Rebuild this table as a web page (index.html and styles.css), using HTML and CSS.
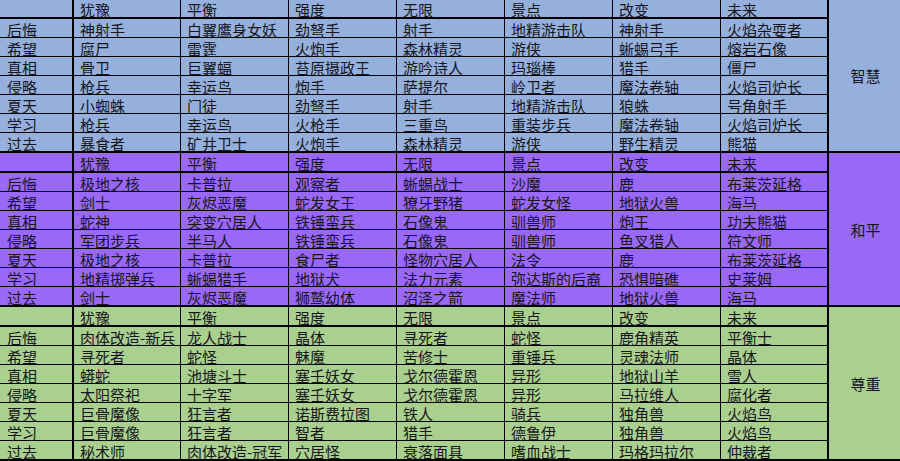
FILE: index.html
```html
<!DOCTYPE html>
<html lang="zh">
<head>
<meta charset="utf-8">
<link rel="stylesheet" href="styles.css">
</head>
<body>
<div class="sheet">
  <div class="section blue first">
    <div class="c h k"></div><div class="c h">犹豫</div><div class="c h">平衡</div><div class="c h">强度</div><div class="c h">无限</div><div class="c h">景点</div><div class="c h">改变</div><div class="c h e">未来</div>
    <div class="label">智慧</div>
    <div class="c k">后悔</div><div class="c">神射手</div><div class="c">白翼鹰身女妖</div><div class="c">劲弩手</div><div class="c">射手</div><div class="c">地精游击队</div><div class="c">神射手</div><div class="c e">火焰杂耍者</div>
    <div class="c k">希望</div><div class="c">腐尸</div><div class="c">雷霆</div><div class="c">火炮手</div><div class="c">森林精灵</div><div class="c">游侠</div><div class="c">蜥蜴弓手</div><div class="c e">熔岩石像</div>
    <div class="c k">真相</div><div class="c">骨卫</div><div class="c">巨翼蝠</div><div class="c">苔原摄政王</div><div class="c">游吟诗人</div><div class="c">玛瑙棒</div><div class="c">猎手</div><div class="c e">僵尸</div>
    <div class="c k">侵略</div><div class="c">枪兵</div><div class="c">幸运鸟</div><div class="c">炮手</div><div class="c">萨提尔</div><div class="c">岭卫者</div><div class="c">魔法卷轴</div><div class="c e">火焰司炉长</div>
    <div class="c k">夏天</div><div class="c">小蜘蛛</div><div class="c">门徒</div><div class="c">劲弩手</div><div class="c">射手</div><div class="c">地精游击队</div><div class="c">狼蛛</div><div class="c e">号角射手</div>
    <div class="c k">学习</div><div class="c">枪兵</div><div class="c">幸运鸟</div><div class="c">火枪手</div><div class="c">三重鸟</div><div class="c">重装步兵</div><div class="c">魔法卷轴</div><div class="c e">火焰司炉长</div>
    <div class="c k l">过去</div><div class="c l">暴食者</div><div class="c l">矿井卫士</div><div class="c l">火炮手</div><div class="c l">森林精灵</div><div class="c l">游侠</div><div class="c l">野生精灵</div><div class="c e l">熊猫</div>
  </div>
  <div class="section purple">
    <div class="c h k"></div><div class="c h">犹豫</div><div class="c h">平衡</div><div class="c h">强度</div><div class="c h">无限</div><div class="c h">景点</div><div class="c h">改变</div><div class="c h e">未来</div>
    <div class="label">和平</div>
    <div class="c k">后悔</div><div class="c">极地之核</div><div class="c">卡普拉</div><div class="c">观察者</div><div class="c">蜥蜴战士</div><div class="c">沙魔</div><div class="c">鹿</div><div class="c e">布莱茨延格</div>
    <div class="c k">希望</div><div class="c">剑士</div><div class="c">灰烬恶魔</div><div class="c">蛇发女王</div><div class="c">獠牙野猪</div><div class="c">蛇发女怪</div><div class="c">地狱火兽</div><div class="c e">海马</div>
    <div class="c k">真相</div><div class="c">蛇神</div><div class="c">突变穴居人</div><div class="c">铁锤蛮兵</div><div class="c">石像鬼</div><div class="c">驯兽师</div><div class="c">炮王</div><div class="c e">功夫熊猫</div>
    <div class="c k">侵略</div><div class="c">军团步兵</div><div class="c">半马人</div><div class="c">铁锤蛮兵</div><div class="c">石像鬼</div><div class="c">驯兽师</div><div class="c">鱼叉猎人</div><div class="c e">符文师</div>
    <div class="c k">夏天</div><div class="c">极地之核</div><div class="c">卡普拉</div><div class="c">食尸者</div><div class="c">怪物穴居人</div><div class="c">法令</div><div class="c">鹿</div><div class="c e">布莱茨延格</div>
    <div class="c k">学习</div><div class="c">地精掷弹兵</div><div class="c">蜥蜴猎手</div><div class="c">地狱犬</div><div class="c">法力元素</div><div class="c">弥达斯的后裔</div><div class="c">恐惧暗礁</div><div class="c e">史莱姆</div>
    <div class="c k l">过去</div><div class="c l">剑士</div><div class="c l">灰烬恶魔</div><div class="c l">狮鹫幼体</div><div class="c l">沼泽之箭</div><div class="c l">魔法师</div><div class="c l">地狱火兽</div><div class="c e l">海马</div>
  </div>
  <div class="section green">
    <div class="c h k"></div><div class="c h">犹豫</div><div class="c h">平衡</div><div class="c h">强度</div><div class="c h">无限</div><div class="c h">景点</div><div class="c h">改变</div><div class="c h e">未来</div>
    <div class="label">尊重</div>
    <div class="c k">后悔</div><div class="c">肉体改造-新兵</div><div class="c">龙人战士</div><div class="c">晶体</div><div class="c">寻死者</div><div class="c">蛇怪</div><div class="c">鹿角精英</div><div class="c e">平衡士</div>
    <div class="c k">希望</div><div class="c">寻死者</div><div class="c">蛇怪</div><div class="c">魅魔</div><div class="c">苦修士</div><div class="c">重锤兵</div><div class="c">灵魂法师</div><div class="c e">晶体</div>
    <div class="c k">真相</div><div class="c">蟒蛇</div><div class="c">池塘斗士</div><div class="c">塞壬妖女</div><div class="c">戈尔德霍恩</div><div class="c">异形</div><div class="c">地狱山羊</div><div class="c e">雪人</div>
    <div class="c k">侵略</div><div class="c">太阳祭祀</div><div class="c">十字军</div><div class="c">塞壬妖女</div><div class="c">戈尔德霍恩</div><div class="c">异形</div><div class="c">马拉维人</div><div class="c e">腐化者</div>
    <div class="c k">夏天</div><div class="c">巨骨魔像</div><div class="c">狂言者</div><div class="c">诺斯费拉图</div><div class="c">铁人</div><div class="c">骑兵</div><div class="c">独角兽</div><div class="c e">火焰鸟</div>
    <div class="c k">学习</div><div class="c">巨骨魔像</div><div class="c">狂言者</div><div class="c">智者</div><div class="c">猎手</div><div class="c">德鲁伊</div><div class="c">独角兽</div><div class="c e">火焰鸟</div>
    <div class="c k l">过去</div><div class="c l">秘术师</div><div class="c l">肉体改造-冠军</div><div class="c l">穴居怪</div><div class="c l">衰落面具</div><div class="c l">嗜血战士</div><div class="c l">玛格玛拉尔</div><div class="c e l">仲裁者</div>
  </div>
</div>
</body>
</html>
```

FILE: styles.css
```css
html, body {
  margin: 0;
  padding: 0;
  background: #ffffff;
}
.sheet {
  width: 900px;
  height: 461px;
  overflow: hidden;
  font-family: "Noto Sans CJK SC", "Noto Sans", sans-serif;
  font-size: 15px;
  color: #16161c;
}
.section {
  display: grid;
  grid-template-columns: 74px 107px repeat(6, 108px) 71px;
  grid-template-rows: 20px repeat(6, 19px) 20px;
}
.section.first {
  grid-template-rows: 19px repeat(6, 19px) 20px;
}
.blue { background: #95b0dc; }
.purple { background: #9a68f6; }
.green { background: #aad08f; }
.c {
  box-sizing: border-box;
  border-right: 1px solid #000;
  border-bottom: 1px solid #000;
  padding-left: 6px;
  display: flex;
  align-items: flex-end;
  line-height: 15px;
  padding-bottom: 0;
  white-space: nowrap;
  min-width: 0;
}
.c.k {
  border-right-width: 2px;
  padding-left: 7px;
}
.c.h {
  border-bottom-width: 2px;
}
.c.e {
  border-right-width: 2px;
}
.c.l {
  border-bottom-width: 2px;
}
.label {
  grid-column: 9;
  grid-row: 1 / span 8;
  box-sizing: border-box;
  border-bottom: 2px solid #000;
  display: flex;
  align-items: center;
  justify-content: center;
  padding-left: 2px;
}
```
